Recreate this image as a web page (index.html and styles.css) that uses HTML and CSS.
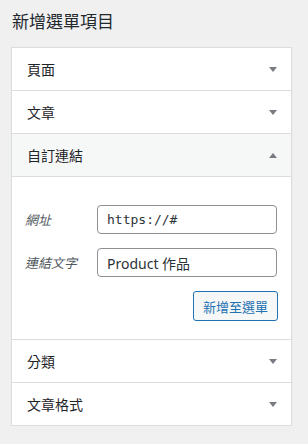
FILE: index.html
```html
<!DOCTYPE html>
<html lang="zh-Hant">

<head>
    <meta name="viewport" content="width=device-width, initial-scale=1.0" />
    <title>新增選單項目</title>
    <link rel="stylesheet" href="styles.css">
</head>

<body>
    <div class="menu-items">
        <h2 class="heading">新增選單項目</h2>
        <div class="accordion">
            <div class="section">
                <div class="section-title">頁面<span class="arrow"></span></div>
            </div>
            <div class="section">
                <div class="section-title">文章<span class="arrow"></span></div>
            </div>
            <div class="section open">
                <div class="section-title">自訂連結<span class="arrow"></span></div>
                <div class="section-content">
                    <div class="field">
                        <label class="field-label" for="url">網址</label>
                        <input id="url" class="field-input code" type="text" value="https://#">
                    </div>
                    <div class="field">
                        <label class="field-label" for="link-text">連結文字</label>
                        <input id="link-text" class="field-input" type="text" value="Product 作品">
                    </div>
                    <div class="actions">
                        <button class="button">新增至選單</button>
                    </div>
                </div>
            </div>
            <div class="section">
                <div class="section-title">分類<span class="arrow"></span></div>
            </div>
            <div class="section">
                <div class="section-title">文章格式<span class="arrow"></span></div>
            </div>
        </div>
    </div>
</body>

</html>
```

FILE: styles.css
```css
* {
    padding: 0;
    margin: 0;
    box-sizing: border-box;
    font-family: "Noto Sans", "Noto Sans CJK TC", sans-serif;
}

body {
    background-color: #f0f0f1;
    color: #1d2327;
}

.menu-items {
    padding: 11px 16px 0 11px;
}

.heading {
    font-size: 17px;
    font-weight: 400;
    line-height: 22px;
    padding-left: 1px;
    margin-bottom: 14px;
    color: #23282d;
}

.accordion {
    background-color: #ffffff;
    border: 1px solid #dcdcde;
    box-shadow: 0 1px 1px rgba(0, 0, 0, 0.06);
}

.section+.section {
    border-top: 1px solid #dcdcde;
}

.section-title {
    display: flex;
    justify-content: space-between;
    align-items: center;
    height: 42px;
    padding: 0 14px 0 15px;
    font-size: 14px;
}

.arrow {
    width: 0;
    height: 0;
    border-left: 4px solid transparent;
    border-right: 4px solid transparent;
    border-top: 5px solid #787c82;
}

.open .section-title {
    background-color: #f6f7f7;
    border-bottom: 1px solid #dcdcde;
    height: 43px;
}

.open .arrow {
    border-top: 0;
    border-bottom: 5px solid #787c82;
}

.section-content {
    padding: 28px 14px 18px 13px;
    display: flex;
    flex-direction: column;
    gap: 14px;
}

.field {
    display: flex;
    align-items: center;
}

.field-label {
    flex-shrink: 0;
    width: 72px;
    font-size: 13px;
    font-style: italic;
    color: #50575e;
}

.field-input {
    flex: 1;
    min-width: 0;
    height: 29px;
    padding: 0 9px;
    border: 1px solid #8c8f94;
    border-radius: 4px;
    font-size: 14px;
    color: #2c3338;
    background-color: #ffffff;
}

.field-input.code {
    font-family: "DejaVu Sans Mono", "Liberation Mono", monospace;
    font-size: 13px;
}

.actions {
    display: flex;
    justify-content: flex-end;
    margin-right: -1px;
}

.button {
    height: 30px;
    padding: 0 9px;
    border: 1px solid #2271b1;
    border-radius: 3px;
    background-color: #f6f7f7;
    color: #2271b1;
    font-size: 13px;
}
```
